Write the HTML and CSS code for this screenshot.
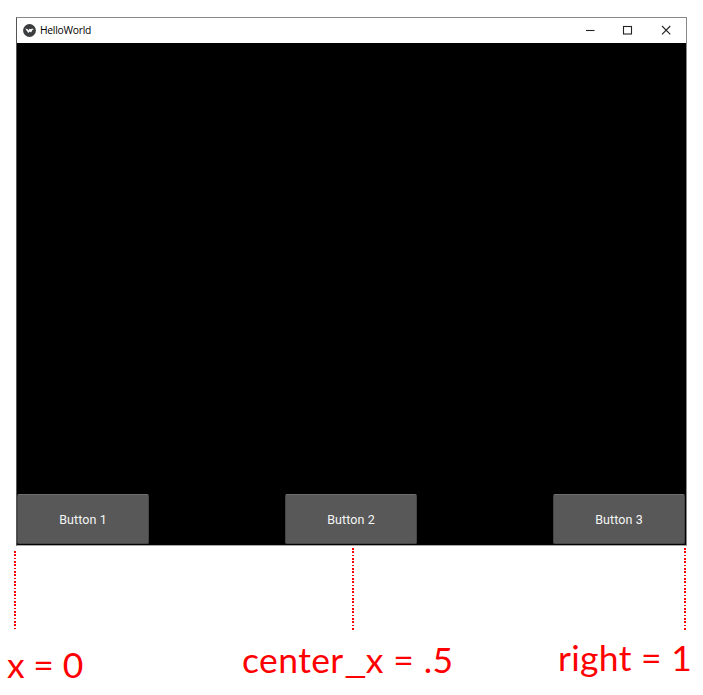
FILE: index.html
```html
<!DOCTYPE html>
<html lang="en">
<head>
<meta charset="utf-8">
<title>HelloWorld</title>
<link rel="stylesheet" href="styles.css">
</head>
<body>
<main class="figure">
  <section class="window">
    <header class="titlebar">
      <svg class="app-icon" viewBox="0 0 13 13"><circle cx="6.5" cy="6.5" r="6.4" fill="#3b3d3e"/><path d="M2.2 4.6L4.8 5.2 5.4 6.6 6.5 4.8 8 5.2 9 4.4 11 5.3 9.5 5.8 8.1 8.4 6.7 7.5 5.3 9.1Z" fill="#fff"/></svg>
      <span class="title">HelloWorld</span>
      <svg class="controls" viewBox="0 0 88 12" fill="none" stroke="#222" stroke-width="1.1"><path d="M1 6.5H9.5"/><rect x="38.5" y="2.5" width="8" height="7.5"/><path d="M77 2L85.3 10.3M85.3 2L77 10.3"/></svg>
    </header>
    <div class="canvas">
      <button class="btn">Button 1</button>
      <button class="btn">Button 2</button>
      <button class="btn">Button 3</button>
    </div>
  </section>
  <section class="notes">
    <div class="note note-left"><i class="guide"></i><span class="label">x = 0</span></div>
    <div class="note note-center"><i class="guide"></i><span class="label">center<span class="underscore">_</span>x = .5</span></div>
    <div class="note note-right"><i class="guide"></i><span class="label">right = 1</span></div>
  </section>
</main>
</body>
</html>
```
FILE: styles.css
```css
body {
  margin: 0;
  background: #fff;
}

.figure {
  box-sizing: border-box;
  width: 703px;
  height: 695px;
  padding-top: 17px;
  overflow: hidden;
}

.window {
  box-sizing: border-box;
  width: 671px;
  height: 529px;
  margin-left: 16px;
  border: 1px solid #888;
  border-left-color: #555;
  border-bottom-color: #aaa;
  display: flex;
  flex-direction: column;
}

.titlebar {
  height: 25px;
  display: flex;
  align-items: center;
  background: #fff;
}

.app-icon {
  width: 13px;
  height: 13px;
  margin: 0 0 1px 6px;
}

.title {
  margin-left: 4px;
  font: 10.3px/25px "Open Sans", sans-serif;
  letter-spacing: -0.25px;
  color: #000;
}

.controls {
  width: 88px;
  height: 12px;
  margin: 0 13px 2px auto;
}

.canvas {
  flex: 1;
  display: flex;
  align-items: flex-end;
  justify-content: space-between;
  padding: 0 1px 1px 0;
  background: #000;
}

.btn {
  box-sizing: border-box;
  width: 132px;
  height: 50px;
  padding: 0;
  border: 1px solid #464646;
  border-top-color: #6e6e6e;
  border-radius: 2px;
  background: #585858;
  color: #f5f5f5;
  font: 12.5px Roboto, sans-serif;
  letter-spacing: 0.1px;
}

.notes {
  display: flex;
  padding-top: 1px;
}

.note {
  display: flex;
  flex-direction: column;
}

.guide {
  width: 2px;
  height: 82px;
  margin-top: 1px;
  background: repeating-linear-gradient(#f00 0 1.6px, #fff 1.6px 3.333px);
}

.label {
  font: 35.5px/44px Lato, sans-serif;
  color: #f00;
  white-space: pre;
}

.note-left {
  width: 235px;
  padding-left: 7px;
}

.note-left .guide {
  height: 79px;
  margin: 4px 0 0 7px;
}

.note-left .label {
  margin-top: 13px;
  letter-spacing: -0.2px;
}

.note-center {
  width: 308px;
}

.note-center .guide {
  margin-left: 110px;
}

.note-center .label {
  margin-top: 8px;
  letter-spacing: 0.4px;
}

.underscore {
  display: inline-block;
  width: 22px;
  transform: scaleX(1.4);
  transform-origin: 0 50%;
}

.note-right .guide {
  margin-left: 134px;
}

.note-right .label {
  margin: 6px 0 0 8px;
  letter-spacing: 0.3px;
}
```
